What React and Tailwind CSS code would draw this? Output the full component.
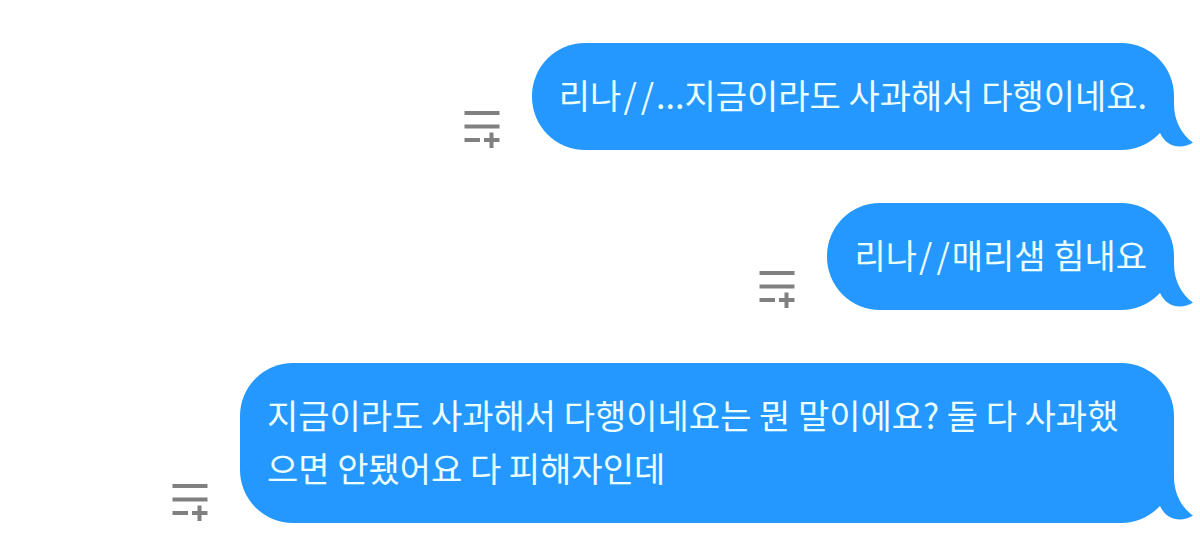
const messages = [
  { id: 1, to: '리나', text: '...지금이라도 사과해서 다행이네요.' },
  { id: 2, to: '리나', text: '매리샘 힘내요' },
  { id: 3, text: '지금이라도 사과해서 다행이네요는 뭔 말이에요? 둘 다 사과했으면 안됐어요 다 피해자인데' },
];

function AddLineIcon() {
  return (
    <svg width="36" height="38" viewBox="0 0 36 38" fill="#808080" aria-hidden="true">
      <path d="M0.5 1h35v4h-35zM0.5 14.5h35v4h-35zM0.5 28h15.5v4H0.5z" />
      <path d="M20 28h5.5v-5.5h4V28h6v4h-6v6h-4v-6H20z" />
    </svg>
  );
}

function BubbleTail() {
  return (
    <svg
      className="absolute bottom-0 -right-5"
      width="44"
      height="60"
      viewBox="0 0 44 60"
      fill="#2498ff"
      aria-hidden="true"
    >
      <path d="M24 6V14C24 31 32 45 43 52.5C32 59.5 17 58 10 43L6 34Z" />
    </svg>
  );
}

function Message({ to, text }) {
  return (
    <li className="flex items-end justify-end gap-8">
      <button type="button" aria-label="추가" className="shrink-0 pb-0.5">
        <AddLineIcon />
      </button>
      <div className="relative max-w-[934px] rounded-[53px] bg-[#2498ff] px-[27px] pt-[25px] pb-[29px]">
        <p className="text-[34px] leading-[53px] font-normal text-[#ebffff]">
          {to && (
            <>
              {to}
              <span className="mx-0.5">/</span>
              <span className="mx-0.5">/</span>
            </>
          )}
          {text}
        </p>
        <BubbleTail />
      </div>
    </li>
  );
}

export default function App() {
  return (
    <main className="bg-white pt-[43px] pr-[26px] pb-[19px] pl-6 font-['Noto_Sans_CJK_KR',sans-serif]">
      <ul className="flex flex-col gap-[53px]">
        {messages.map((m) => (
          <Message key={m.id} to={m.to} text={m.text} />
        ))}
      </ul>
    </main>
  );
}
